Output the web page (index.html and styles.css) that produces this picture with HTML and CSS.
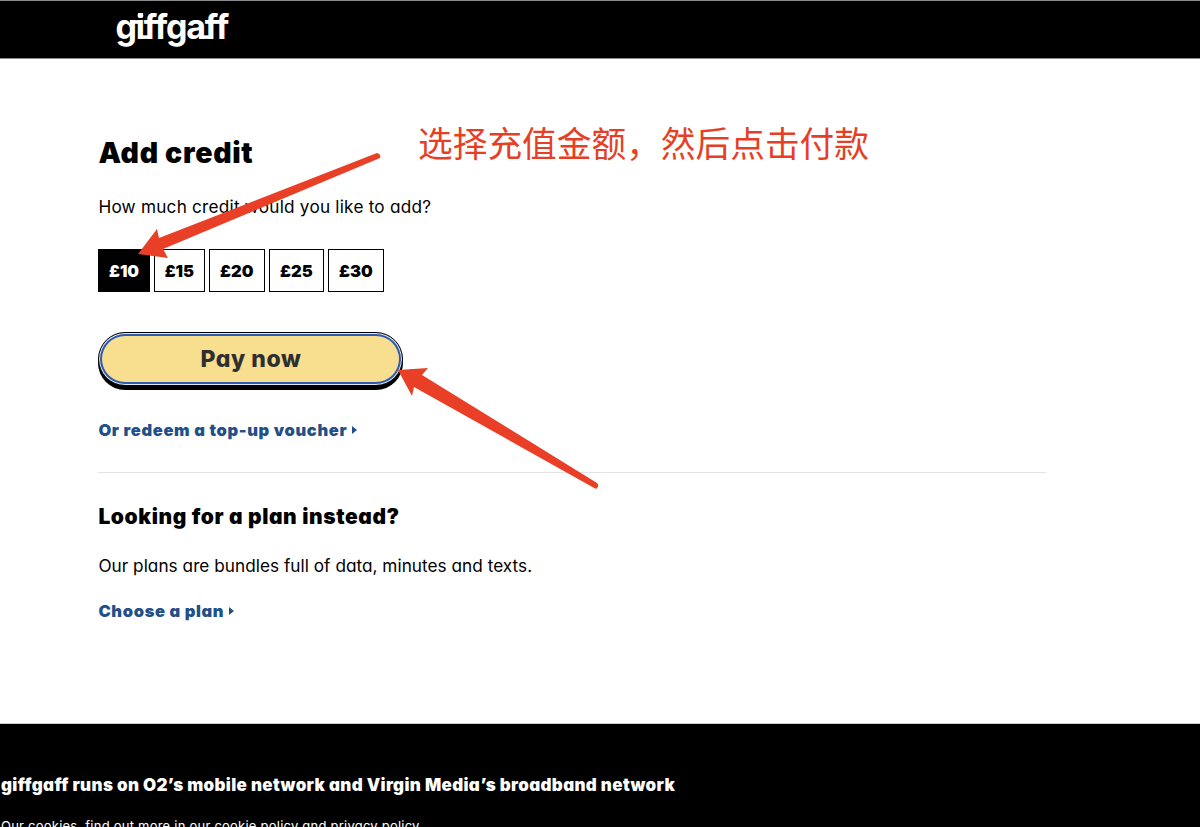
FILE: index.html
```html
<!DOCTYPE html>
<html lang="en">
  <head>
    <meta charset="UTF-8" />
    <meta name="viewport" content="width=device-width, initial-scale=1.0" />
    <title>Add credit | giffgaff</title>
    <link rel="stylesheet" href="styles.css">
  </head>
  <body>
    <header class="header">
      <a class="logo" href="#">
        giffgaff
        <!-- Square dot and bars that join the letters -->
        <svg class="logo-joins" width="112" height="40" viewBox="0 0 112 40">
          <rect x="22" y="0" width="5" height="4.5" />
          <rect x="14" y="7.2" width="12" height="3.6" />
          <rect x="22.2" y="22.3" width="13" height="3.6" />
          <rect x="83" y="22.3" width="13" height="3.6" />
        </svg>
      </a>
    </header>

    <main class="content">
      <h1 class="title">Add credit</h1>
      <p class="text question">How much credit would you like to add?</p>

      <div class="amounts">
        <button class="amount selected">£10</button>
        <button class="amount">£15</button>
        <button class="amount wide">£20</button>
        <button class="amount wide">£25</button>
        <button class="amount wide">£30</button>
      </div>

      <button class="btn-pay">Pay now</button>

      <a class="link" href="#">Or redeem a top-up voucher</a>

      <hr class="divider" />

      <h2 class="subtitle">Looking for a plan instead?</h2>
      <p class="text plans">Our plans are bundles full of data, minutes and texts.</p>
      <a class="link" href="#">Choose a plan</a>
    </main>

    <footer class="footer">
      <p class="footer-title">giffgaff runs on O2’s mobile network and Virgin Media’s broadband network</p>
      <p class="footer-text">Our cookies, find out more in our cookie policy and privacy policy.</p>
    </footer>

    <p class="note" lang="zh-CN">选择充值金额，然后点击付款</p>
    <svg class="arrows" width="1200" height="827" viewBox="0 0 1200 827">
      <path d="M138 254L157 229L159 238L377 153Q381 154 380 158L163 249L168 258Z" />
      <path d="M398 370L428 368L422 375L597 483Q600 486 596 489L414 387L412 396Z" />
    </svg>
  </body>
</html>
```
FILE: styles.css
```css
* {
  margin: 0;
  padding: 0;
  box-sizing: border-box;
}

body {
  position: relative;
  height: 827px;
  overflow: hidden;
  background-color: #fff;
  color: #000;
  font-family: Inter, "Liberation Sans", sans-serif;
  font-feature-settings: "cv11";
}

.header {
  height: 59px;
  padding-left: 115.5px;
  background-color: #000;
  border-top: 1px solid #8a8a8a;
  border-bottom: 1px solid #8a8a8a;
}

.logo {
  display: inline-block;
  position: relative;
  color: #fff;
  font-size: 34px;
  font-weight: 650;
  line-height: 51px;
  letter-spacing: -1.25px;
  text-decoration: none;
  font-feature-settings: normal;
}

.logo-joins {
  position: absolute;
  left: 0;
  top: 12px;
  fill: #fff;
}

.content {
  display: flex;
  flex-direction: column;
  align-items: flex-start;
  height: 664px;
  padding: 76px 154px 0 98.4px;
}

.title {
  font-size: 28.5px;
  font-weight: 900;
  line-height: 36px;
  letter-spacing: 0.7px;
}

.text {
  font-size: 17.2px;
  line-height: 24px;
}

.question {
  margin-top: 24px;
  letter-spacing: 0.22px;
}

.amounts {
  display: flex;
  gap: 4px;
  margin-top: 30px;
}

.amount {
  width: 51.3px;
  height: 43px;
  border: 1px solid #000;
  background-color: #fff;
  color: #000;
  font: inherit;
  font-size: 16.5px;
  font-weight: 900;
}

.amount.wide {
  width: 55.6px;
}

.amount.selected {
  background-color: #000;
  color: #fff;
}

.btn-pay {
  width: 305px;
  height: 54px;
  margin-top: 40px;
  border: 1px solid #000;
  border-radius: 27px;
  background-color: #f8de8f;
  box-shadow: inset 0 0 0 1px #dce8fa, inset 0 0 0 3px #3059b0, 0 4px 0 #000;
  color: #2f2f2f;
  font: inherit;
  font-size: 23px;
  font-weight: 800;
  letter-spacing: 0.55px;
}

.link {
  display: flex;
  align-items: center;
  margin-top: 32px;
  color: #214f87;
  font-size: 16.5px;
  font-weight: 900;
  line-height: 24px;
  letter-spacing: 0.64px;
  text-decoration: none;
}

.link::after {
  content: "";
  margin-left: 5px;
  border-left: 5px solid #214f87;
  border-top: 4.5px solid transparent;
  border-bottom: 4.5px solid transparent;
}

.divider {
  align-self: stretch;
  margin-top: 30px;
  border: none;
  border-top: 1px solid #e3e3e3;
}

.subtitle {
  margin-top: 30px;
  font-size: 21px;
  font-weight: 900;
  line-height: 28px;
  letter-spacing: 0.6px;
}

.plans {
  margin-top: 23px;
  letter-spacing: 0.03px;
}

.plans + .link {
  margin-top: 21px;
}

.footer {
  height: 104px;
  padding: 49px 0 0 1px;
  border-top: 1px solid #cfcfcf;
  background-color: #000;
  color: #fff;
}

.footer-title {
  font-size: 17px;
  font-weight: 900;
  line-height: 24px;
  letter-spacing: 0.34px;
}

.footer-text {
  margin-top: 18px;
  font-size: 13px;
  line-height: 22px;
  letter-spacing: 0.23px;
}

/* Annotations drawn over the page */
.note {
  position: absolute;
  left: 418px;
  top: 121px;
  color: #e63f25;
  font-family: "Noto Sans CJK SC", sans-serif;
  font-size: 34.7px;
  line-height: 42px;
  font-feature-settings: normal;
  white-space: nowrap;
}

.arrows {
  position: absolute;
  left: 0;
  top: 0;
  fill: #e93f26;
  pointer-events: none;
}
```
